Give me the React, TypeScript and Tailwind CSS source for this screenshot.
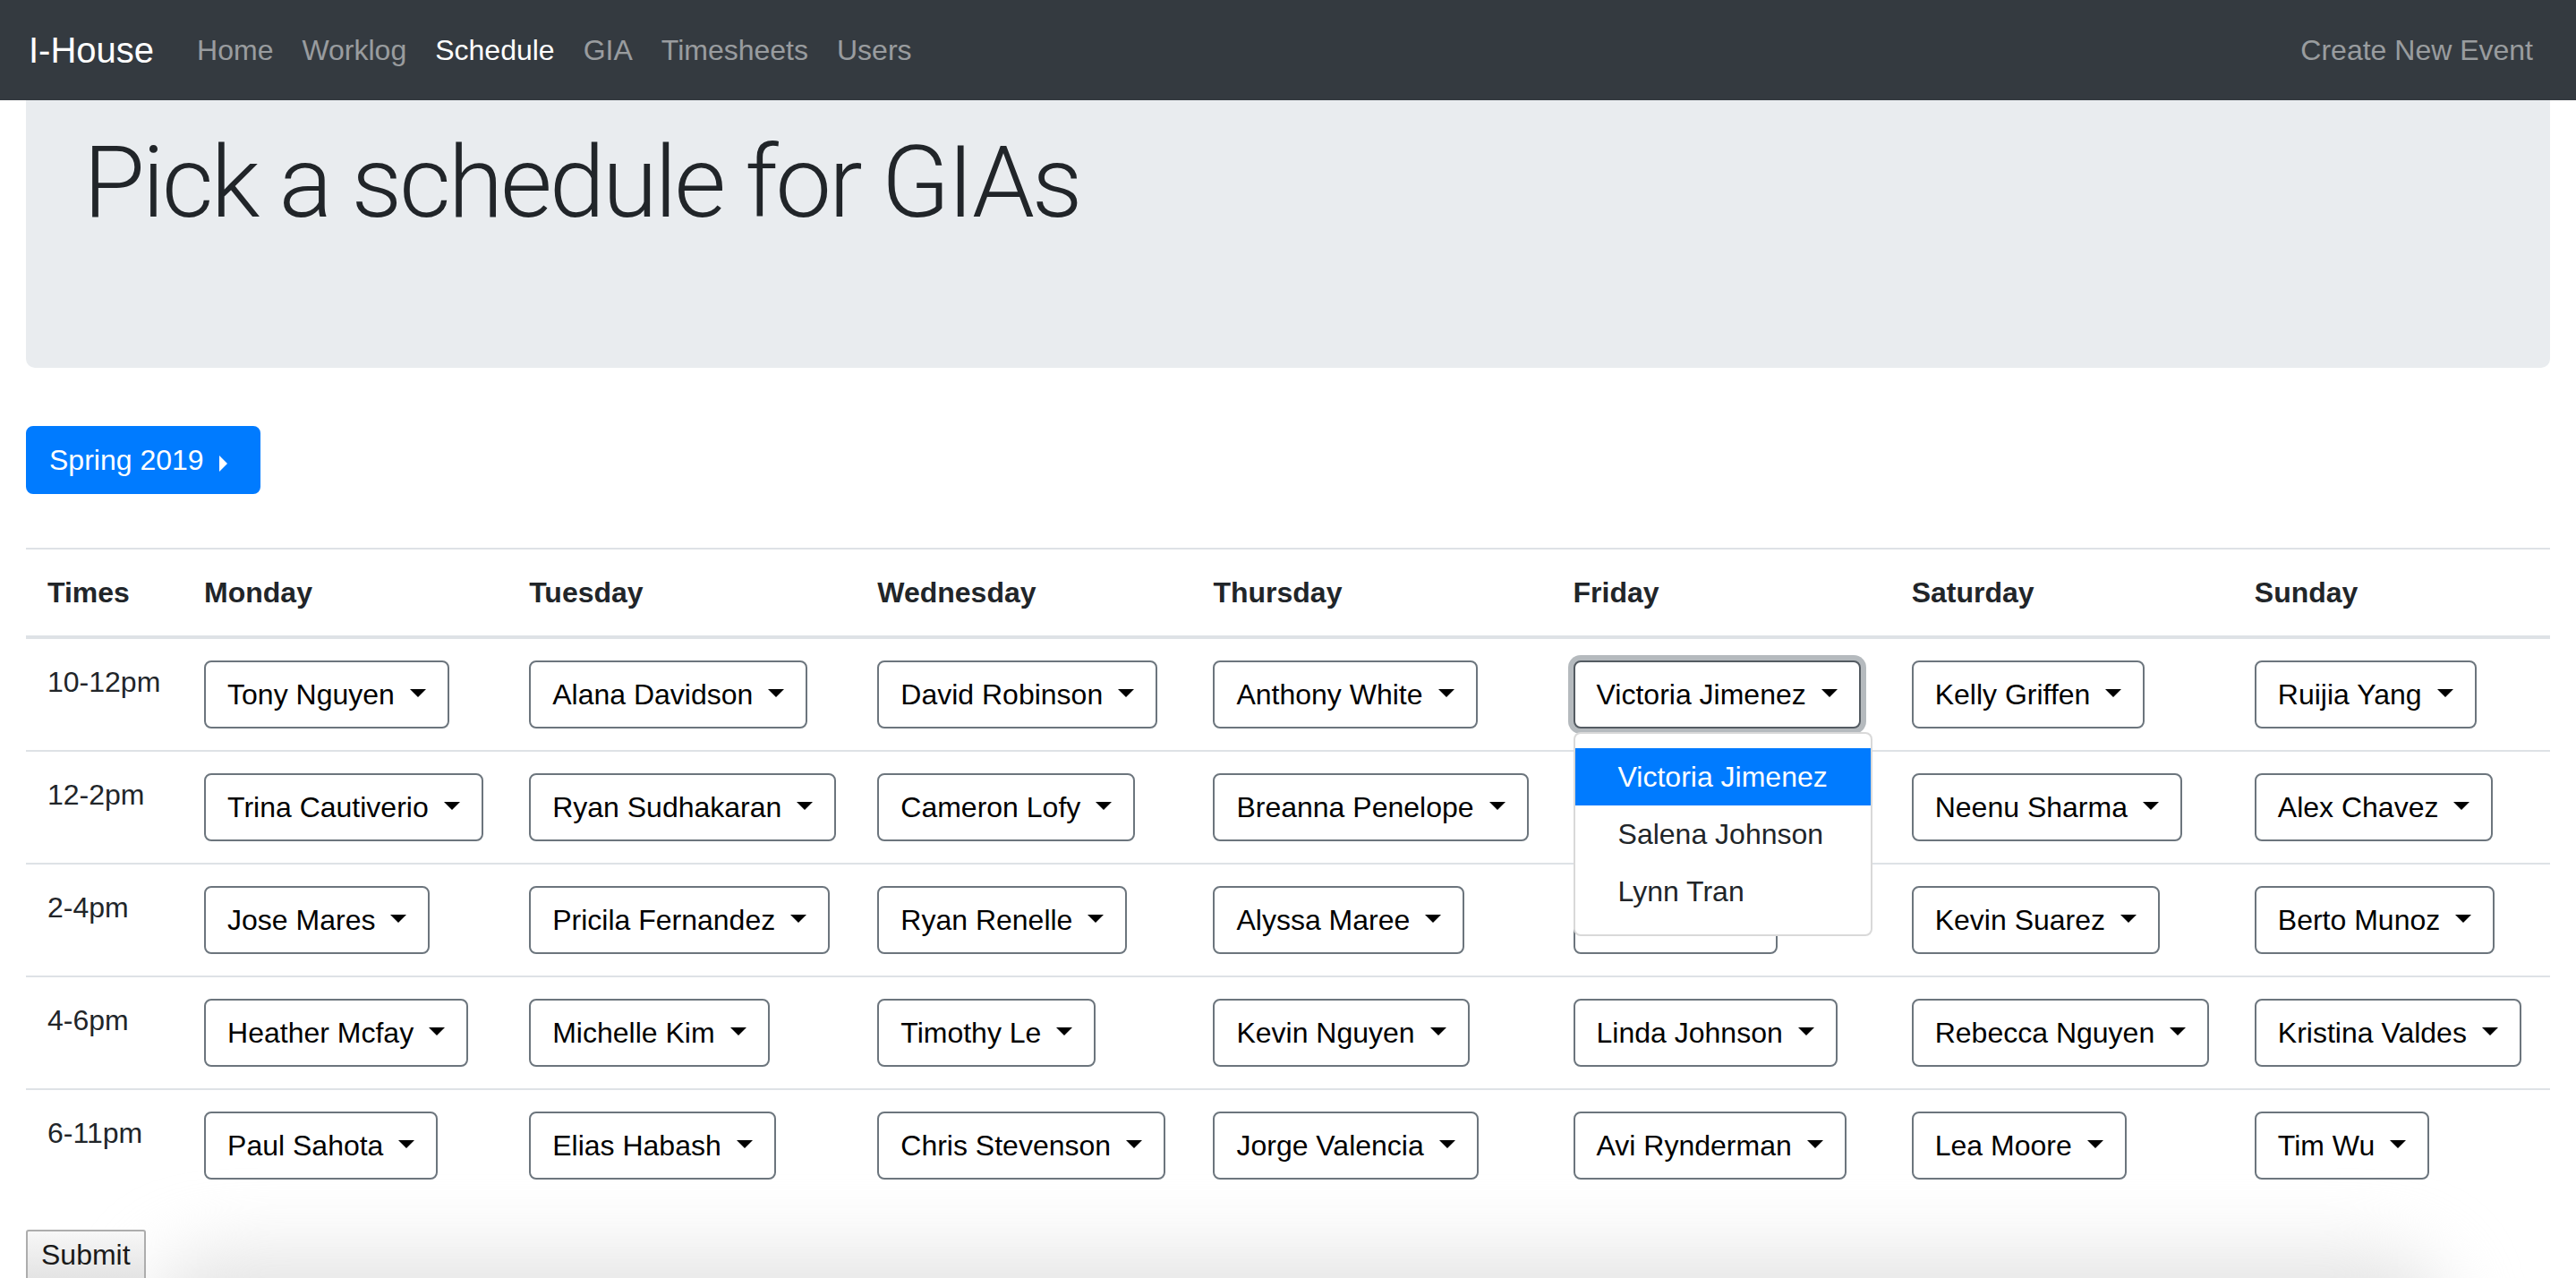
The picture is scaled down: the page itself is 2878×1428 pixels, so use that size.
import { useState } from 'react'

const days = ['Monday', 'Tuesday', 'Wednesday', 'Thursday', 'Friday', 'Saturday', 'Sunday']

const navLinks = [
  { label: 'Home', active: false },
  { label: 'Worklog', active: false },
  { label: 'Schedule', active: true },
  { label: 'GIA', active: false },
  { label: 'Timesheets', active: false },
  { label: 'Users', active: false },
]

const schedule = [
  { time: '10-12pm', names: ['Tony Nguyen', 'Alana Davidson', 'David Robinson', 'Anthony White', 'Victoria Jimenez', 'Kelly Griffen', 'Ruijia Yang'] },
  { time: '12-2pm', names: ['Trina Cautiverio', 'Ryan Sudhakaran', 'Cameron Lofy', 'Breanna Penelope', 'Salena Johnson', 'Neenu Sharma', 'Alex Chavez'] },
  { time: '2-4pm', names: ['Jose Mares', 'Pricila Fernandez', 'Ryan Renelle', 'Alyssa Maree', 'Lynn Tran', 'Kevin Suarez', 'Berto Munoz'] },
  { time: '4-6pm', names: ['Heather Mcfay', 'Michelle Kim', 'Timothy Le', 'Kevin Nguyen', 'Linda Johnson', 'Rebecca Nguyen', 'Kristina Valdes'] },
  { time: '6-11pm', names: ['Paul Sahota', 'Elias Habash', 'Chris Stevenson', 'Jorge Valencia', 'Avi Rynderman', 'Lea Moore', 'Tim Wu'] },
]

const fridayOptions = ['Victoria Jimenez', 'Salena Johnson', 'Lynn Tran']

function NameDropdown({ name, open }: { name: string; open: boolean }) {
  return (
    <div className="relative inline-block">
      <button
        type="button"
        className={`whitespace-nowrap rounded-lg border-2 bg-white px-6 py-3 text-[32px] leading-[48px] text-black ${
          open ? 'border-[#545b62] shadow-[0_0_0_6px_rgba(108,117,125,0.5)]' : 'border-[#6c757d]'
        }`}
      >
        {name}
        <span className="ml-[17px] inline-block border-x-[9.6px] border-t-[9.6px] border-x-transparent border-t-black align-[0.255em]" />
      </button>
      {open && (
        <div className="absolute left-0 top-full z-20 mt-[4px] min-w-[320px] rounded-lg border-2 border-black/15 bg-white py-4">
          {fridayOptions.map((opt) => (
            <div
              key={opt}
              className={`whitespace-nowrap px-12 py-2 leading-[48px] ${
                opt === name ? 'bg-[#007bff] text-white' : 'text-[#212529]'
              }`}
            >
              {opt}
            </div>
          ))}
        </div>
      )}
    </div>
  )
}

export default function App() {
  const [openCell] = useState('0-4')

  return (
    <div className="relative min-h-[1428px] overflow-hidden bg-white font-['Liberation_Sans',Arial,sans-serif] text-[32px] leading-[1.5] text-[#212529]">
      <nav className="flex h-[112px] items-center bg-[#343a40] px-8">
        <span className="mr-8 text-[40px] leading-[1.5] text-white">I-House</span>
        <ul className="flex">
          {navLinks.map((link) => (
            <li key={link.label} className={`px-4 ${link.active ? 'text-white' : 'text-white/50'}`}>
              {link.label}
            </li>
          ))}
        </ul>
        <span className="ml-auto px-4 text-white/50">Create New Event</span>
      </nav>

      <main className="px-[29px]">
        <div className="h-[299px] rounded-b-[10px] bg-[#e9ecef] px-16 pt-[36px]">
          <h1 className="font-['Roboto',sans-serif] text-[112px] font-light leading-none tracking-[-0.028em]">
            Pick a schedule for GIAs
          </h1>
        </div>

        <div className="mt-[65px]">
          <button
            type="button"
            className="rounded-lg border-2 border-[#007bff] bg-[#007bff] py-3 pl-6 pr-[35px] text-[32px] leading-[48px] text-white"
          >
            Spring 2019
            <span className="ml-[17px] inline-block border-y-[9.6px] border-l-[9.6px] border-y-transparent border-l-white align-[-0.05em]" />
          </button>
        </div>

        <table className="mt-[60px] w-full table-fixed border-collapse">
          <colgroup>
            <col className="w-[175px]" />
            <col className="w-[363px]" />
            <col className="w-[389px]" />
            <col className="w-[375px]" />
            <col className="w-[402px]" />
            <col className="w-[378px]" />
            <col className="w-[383px]" />
            <col className="w-[354px]" />
          </colgroup>
          <thead>
            <tr>
              <th className="border-b-4 border-t-2 border-[#dee2e6] p-6 text-left align-bottom font-bold leading-[48px]">Times</th>
              {days.map((d) => (
                <th key={d} className="border-b-4 border-t-2 border-[#dee2e6] p-6 text-left align-bottom font-bold leading-[48px]">
                  {d}
                </th>
              ))}
            </tr>
          </thead>
          <tbody>
            {schedule.map((row, r) => (
              <tr key={row.time}>
                <td className="border-t-2 border-[#dee2e6] p-6 align-top leading-[48px]">{row.time}</td>
                {row.names.map((name, c) => (
                  <td key={c} className="border-t-2 border-[#dee2e6] p-6 align-top">
                    <NameDropdown name={name} open={openCell === `${r}-${c}`} />
                  </td>
                ))}
              </tr>
            ))}
          </tbody>
        </table>

        <button
          type="button"
          className="relative z-10 mt-8 rounded-[3px] border-2 border-[#adadad] bg-gradient-to-b from-[#f7f7f7] to-[#e3e3e3] px-[15px] py-[6px] text-[32px] leading-[1.3] text-[#1a1a1a]"
        >
          Submit
        </button>
      </main>

      <div className="absolute left-[165px] right-[144px] top-[1400px] h-[200px] rounded-[80px] bg-[#e4e4e4] blur-[40px]" />
    </div>
  )
}
